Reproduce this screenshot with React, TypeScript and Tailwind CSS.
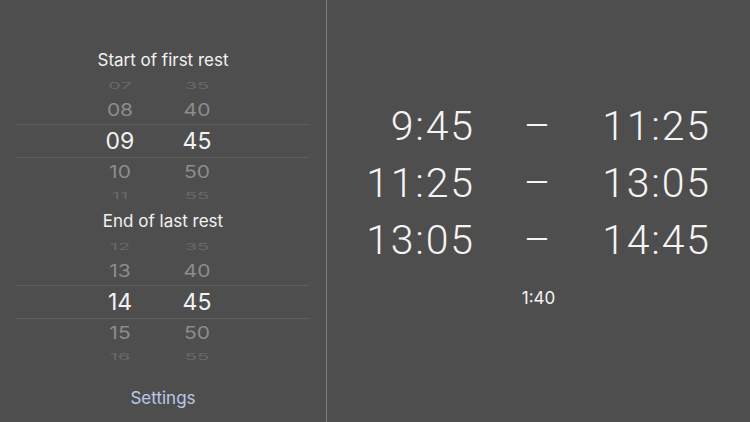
import React from "react";

const font = { fontFamily: "Inter, 'Helvetica Neue', Arial, sans-serif" };

function Row({
  h,
  m,
  kind,
}: {
  h: string;
  m: string;
  kind: "top" | "near-up" | "near-down" | "sel" | "bottom";
}) {
  if (kind === "sel") {
    return (
      <div className="flex h-[34px] items-center border-y border-[#5f5f5f] pl-[74px] gap-[17px] text-[23px] text-[#f2f2f2]">
        <div className="w-[60px] text-center leading-none">{h}</div>
        <div className="w-[60px] text-center leading-none">{m}</div>
      </div>
    );
  }
  if (kind === "near-up" || kind === "near-down") {
    const shift = kind === "near-up" ? "translate-y-[1px]" : "-translate-y-[2px]";
    return (
      <div className="flex h-[31px] items-center pl-[74px] gap-[17px] text-[21px] text-[#8c8c8c]">
        <div className={`w-[60px] text-center leading-none scale-y-[0.82] ${shift}`}>{h}</div>
        <div className={`w-[60px] text-center leading-none scale-y-[0.82] ${shift}`}>{m}</div>
      </div>
    );
  }
  const top = kind === "top";
  return (
    <div className="flex h-[16px] items-center pl-[74px] gap-[17px] text-[20px] text-[#696969]">
      <div
        className={`w-[60px] text-center leading-none scale-y-[0.42] ${
          top ? "translate-y-[1px]" : "-translate-y-[1px]"
        }`}
      >
        {h}
      </div>
      <div
        className={`w-[60px] text-center leading-none scale-y-[0.42] ${
          top ? "translate-y-[1px]" : "-translate-y-[1px]"
        }`}
      >
        {m}
      </div>
    </div>
  );
}

function Picker({
  title,
  hours,
  mins,
}: {
  title: string;
  hours: string[];
  mins: string[];
}) {
  return (
    <div className="flex flex-col">
      <div className="flex h-[32px] items-center justify-center text-[17px] text-[#f2f2f2]">
        {title}
      </div>
      <div className="ml-[16px] mr-[17px] flex flex-col">
        <Row h={hours[0]} m={mins[0]} kind="top" />
        <Row h={hours[1]} m={mins[1]} kind="near-up" />
        <Row h={hours[2]} m={mins[2]} kind="sel" />
        <Row h={hours[3]} m={mins[3]} kind="near-down" />
        <Row h={hours[4]} m={mins[4]} kind="bottom" />
      </div>
    </div>
  );
}

const times = [
  ["9:45", "11:25"],
  ["11:25", "13:05"],
  ["13:05", "14:45"],
];

export default function App() {
  return (
    <div className="flex h-[422px] w-[750px] bg-[#4e4e4e]" style={font}>
      <div className="flex w-[326px] flex-col pt-[45px]">
        <Picker
          title="Start of first rest"
          hours={["07", "08", "09", "10", "11"]}
          mins={["35", "40", "45", "50", "55"]}
        />
        <div className="h-[1px]" />
        <Picker
          title="End of last rest"
          hours={["12", "13", "14", "15", "16"]}
          mins={["35", "40", "45", "50", "55"]}
        />
        <div className="mt-auto mb-[11px] flex h-[24px] items-center justify-center text-[17px] text-[#b9c8e8]">
          Settings
        </div>
      </div>
      <div className="w-[1px] bg-[#7c7c7c]" />
      <div
        className="flex flex-1 flex-col pt-[98px]"
        style={{ fontFamily: "Roboto, 'Helvetica Neue', Arial, sans-serif" }}
      >
        {times.map(([a, b], i) => (
          <div key={i} className="flex h-[57px] items-center text-[41px] font-light leading-none text-[#f4f4f4]">
            <div className="w-[146px] text-right">
              <span className="mr-[-1.8px] tracking-[1.8px]">{a}</span>
            </div>
            <div className="w-[128px] text-center">–</div>
            <div className="w-[108px] text-right">
              <span className="mr-[-1.8px] tracking-[1.8px]">{b}</span>
            </div>
          </div>
        ))}
        <div
          className="mt-[16px] flex h-[28px] items-center justify-center text-[17px] text-[#f2f2f2]"
          style={font}
        >
          1:40
        </div>
      </div>
    </div>
  );
}
